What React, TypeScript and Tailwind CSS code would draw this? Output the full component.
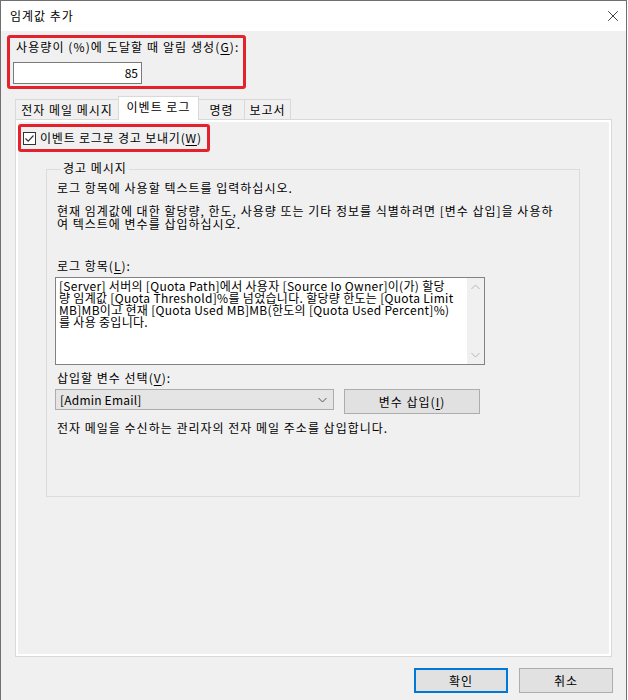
import { X } from 'lucide-react';

const Chevron = ({ up = false, className = '' }: { up?: boolean; className?: string }) => (
  <svg width="9" height="6" viewBox="0 0 9 6" className={className}>
    <path d={up ? 'M0.5 5L4.5 1L8.5 5' : 'M0.5 1L4.5 5L8.5 1'} fill="none" stroke="currentColor" strokeWidth="1" />
  </svg>
);

const App = () => {
  const logLines = [
    '[Server] 서버의 [Quota Path]에서 사용자 [Source Io Owner]이(가) 할당',
    '량 임계값 [Quota Threshold]%를 넘었습니다. 할당량 한도는 [Quota Limit',
    'MB]MB이고 현재 [Quota Used MB]MB(한도의 [Quota Used Percent]%)',
    '를 사용 중입니다.',
  ];

  return (
    <div className="w-[628px] h-[700px] bg-white font-['Noto_Sans_CJK_KR',sans-serif] text-[12px] tracking-[1px] text-black">
      <div className="w-[627px] h-[700px] border border-b-0 border-[#707070] bg-[#f0f0f0] flex flex-col">
        {/* Title bar */}
        <div className="h-[30px] bg-white flex items-center justify-between pl-[9px] pr-[4px]">
          <span className="leading-[16px]">임계값 추가</span>
          <X className="w-[18px] h-[18px]" strokeWidth={1} />
        </div>

        {/* Threshold */}
        <div className="ml-[6px] mt-[4px] w-[239px] h-[54px] border-[3px] border-[#e3222d] rounded-[3px] pl-[6px] pt-[1px]">
          <div className="leading-[16px] tracking-[1.1px]">
            사용량이 (%)에 도달할 때 알림 생성(<u className="underline-offset-2">G</u>):
          </div>
          <div className="mt-[7px] ml-[-3px] w-[129px] h-[22px] border border-[#7a7a7a] bg-white flex items-center justify-end pr-[3px] leading-[16px] tracking-normal">
            85
          </div>
        </div>

        {/* Tabs */}
        <div className="ml-[14px] mt-[7px] flex items-end h-[23px]">
          <div className="w-[104px] h-[20px] border border-b-0 border-[#d9d9d9] flex items-center justify-center leading-[16px]">
            전자 메일 메시지
          </div>
          <div className="relative z-10 -ml-px w-[81px] mb-[-1px] h-[24px] border border-b-0 border-[#d9d9d9] bg-white flex items-start justify-center pt-[2px] leading-[16px]">
            이벤트 로그
          </div>
          <div className="-ml-px w-[47px] h-[20px] border border-b-0 border-[#d9d9d9] flex items-center justify-center leading-[16px]">
            명령
          </div>
          <div className="-ml-px w-[47px] h-[20px] border border-b-0 border-[#d9d9d9] flex items-center justify-center leading-[16px]">
            보고서
          </div>
        </div>

        {/* Tab panel */}
        <div className="ml-[14px] w-[597px] h-[538px] border border-[#d9d9d9] bg-white p-[2px] flex">
          <div className="flex-1 bg-[#f0f0f0] flex flex-col">
            <div className="mt-[2px] w-[192px] h-[28px] border-[3px] border-[#e3222d] rounded-[3px] flex items-center pl-[2px]">
              <div className="w-[13px] h-[13px] border border-[#333] bg-white flex items-center justify-center">
                <svg width="11" height="11" viewBox="0 0 11 11">
                  <path d="M1.5 5.5L4.2 8.2L9.5 2.5" fill="none" stroke="#333" strokeWidth="1.2" />
                </svg>
              </div>
              <span className="ml-[4px] leading-[16px] tracking-[0.8px]">
                이벤트 로그로 경고 보내기(<u className="underline-offset-2">W</u>)
              </span>
            </div>

            {/* Group box */}
            <fieldset className="ml-[28px] mt-[8px] w-[534px] h-[337px] border border-[#dcdcdc] pl-[8px] pr-[10px]">
              <legend className="ml-[6px] px-[2px] leading-[16px] pb-[3px]">경고 메시지</legend>
              <p className="mt-[1px] pl-[2px] leading-[16px]">로그 항목에 사용할 텍스트를 입력하십시오.</p>
              <p className="mt-[8px] pl-[2px] leading-[13px]">
                현재 임계값에 대한 할당량, 한도, 사용량 또는 기타 정보를 식별하려면 [변수 삽입]을 사용하
                <br />
                여 텍스트에 변수를 삽입하십시오.
              </p>
              <div className="mt-[28px] pl-[2px] leading-[16px]">
                로그 항목(<u className="underline-offset-2">L</u>):
              </div>
              <div className="mt-[3px] w-[430px] h-[88px] border border-[#828282] bg-white flex">
                <div className="flex-1 pl-[3px] pt-[2px] leading-[12px] tracking-[0.3px] whitespace-nowrap overflow-hidden">
                  {logLines.map((line, i) => (
                    <div key={i}>{line}</div>
                  ))}
                </div>
                <div className="w-[17px] bg-[#f0f0f0] flex flex-col items-center justify-between py-[6px] text-[#b4b4b4]">
                  <Chevron up />
                  <Chevron />
                </div>
              </div>
              <div className="mt-[5px] pl-[2px] leading-[16px]">
                삽입할 변수 선택(<u className="underline-offset-2">V</u>):
              </div>
              <div className="mt-[3px] flex items-start gap-[10px]">
                <div className="w-[279px] h-[21px] border border-[#adadad] bg-[#e5e5e5] flex items-center justify-between pl-[4px] pr-[6px] leading-[16px] tracking-[0.2px]">
                  <span>[Admin Email]</span>
                  <Chevron className="text-[#555]" />
                </div>
                <div className="w-[136px] h-[25px] border border-[#adadad] bg-[#e1e1e1] flex items-center justify-center leading-[16px]">
                  변수 삽입(<u className="underline-offset-2">I</u>)
                </div>
              </div>
              <p className="mt-[6px] pl-[2px] leading-[16px]">
                전자 메일을 수신하는 관리자의 전자 메일 주소를 삽입합니다.
              </p>
            </fieldset>
          </div>
        </div>

        {/* Footer buttons */}
        <div className="mt-[11px] flex justify-end gap-[11px] pr-[13px]">
          <div className="w-[94px] h-[25px] border-2 border-[#0078d7] bg-[#e1e1e1] flex items-center justify-center leading-[16px]">
            확인
          </div>
          <div className="w-[94px] h-[25px] border border-[#adadad] bg-[#e1e1e1] flex items-center justify-center leading-[16px]">
            취소
          </div>
        </div>
      </div>
    </div>
  );
};

export default App;
